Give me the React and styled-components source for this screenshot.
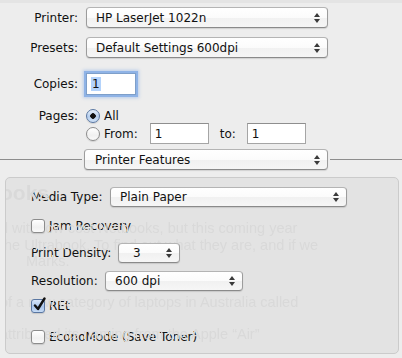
import React from 'react'
import styled, { createGlobalStyle } from 'styled-components'

const Global = createGlobalStyle`
  html, body { margin: 0; padding: 0; }
  body {
    background: linear-gradient(#e4e4e4 0 3px, #ededed 3px);
    font-family: "DejaVu Sans", "Liberation Sans", sans-serif;
    font-size: 12px;
    color: #111;
    width: 402px;
    height: 358px;
    overflow: hidden;
  }
`

const Sheet = styled.div`
  display: flex;
  flex-direction: column;
  padding-top: 7px;
`

const Row = styled.div`
  display: flex;
  align-items: center;
  gap: ${p => p.$gap || 8}px;
  height: ${p => p.$h || 21}px;
  margin-top: ${p => p.$mt || 0}px;
`

const Label = styled.span`
  width: ${p => p.$w || 78}px;
  text-align: ${p => p.$align || 'right'};
  white-space: nowrap;
  flex-shrink: 0;
`

const Popup = styled.div`
  position: relative;
  box-sizing: border-box;
  width: ${p => p.$w}px;
  height: ${p => p.$h || 21}px;
  padding-left: ${p => p.$pl || 9}px;
  display: flex;
  align-items: center;
  border: 1px solid #9c9c9c;
  border-top-color: #b4b4b4;
  border-bottom-color: #8a8a8a;
  border-radius: 4px;
  background: linear-gradient(#ffffff, #fbfbfb 50%, #f1f1f1 51%, #f6f6f6);
  box-shadow: 0 1px 1px rgba(0, 0, 0, 0.12);
  white-space: nowrap;
  flex-shrink: 0;
`

const Arrows = styled.span`
  position: absolute;
  right: 7px;
  top: 50%;
  transform: translateY(-50%);
  display: flex;
  flex-direction: column;
  gap: 2px;
  &::before, &::after {
    content: '';
    width: 0;
    height: 0;
    border-left: 3px solid transparent;
    border-right: 3px solid transparent;
  }
  &::before { border-bottom: 4px solid #3a3a3a; }
  &::after { border-top: 4px solid #3a3a3a; }
`

const TextField = styled.div`
  box-sizing: border-box;
  width: ${p => p.$w}px;
  height: ${p => p.$h || 21}px;
  display: flex;
  align-items: center;
  padding-left: 4px;
  margin-left: ${p => p.$ml || 0}px;
  background: #fff;
  border: 1px solid #a5a5a5;
  border-top-color: #8e8e8e;
  flex-shrink: 0;
  ${p => p.$focus && `
    border-color: #7e9fc9;
    box-shadow: 0 0 0 2px #8fb3e6, 0 0 3px 3px rgba(120, 165, 230, 0.45);
  `}
`

const Selected = styled.span`
  background: #b4d3fb;
  padding: 0 1px;
`

const Radio = styled.span`
  box-sizing: border-box;
  width: 14px;
  height: 14px;
  border-radius: 50%;
  border: 1px solid ${p => (p.$on ? '#5a77a2' : '#8c8c8c')};
  background: ${p =>
    p.$on
      ? 'radial-gradient(circle at 50% 50%, #111 0 2.5px, transparent 3px), linear-gradient(#e6f0fb, #b7cfee 55%, #cfe1f6)'
      : 'linear-gradient(#ffffff, #f0f0f0 60%, #fafafa)'};
  box-shadow: 0 1px 1px rgba(0, 0, 0, 0.12);
  flex-shrink: 0;
`

const Check = styled.span`
  box-sizing: border-box;
  position: relative;
  width: 14px;
  height: 14px;
  border-radius: 3px;
  border: 1px solid ${p => (p.$on ? '#5a77a2' : '#8c8c8c')};
  background: ${p =>
    p.$on
      ? 'linear-gradient(#d8e6f8, #a9c5eb 55%, #c6dbf5)'
      : 'linear-gradient(#ffffff, #f1f1f1 60%, #fafafa)'};
  box-shadow: 0 1px 1px rgba(0, 0, 0, 0.12);
  flex-shrink: 0;
  svg { position: absolute; left: 1px; top: -3px; }
`

const Choice = styled.div`
  display: flex;
  align-items: center;
  gap: ${p => p.$gap || 4}px;
  height: 14px;
  margin-top: ${p => p.$mt || 0}px;
`

const Divider = styled.div`
  display: flex;
  align-items: center;
  gap: 2px;
  height: 21px;
  margin-top: 5px;
  &::before, &::after {
    content: '';
    height: 1px;
    background: #8d8d8d;
  }
  &::before { width: 82px; }
  &::after { flex: 1; }
`

const Panel = styled.div`
  margin: 7px 3px 0 5px;
  height: 177px;
  box-sizing: border-box;
  border: 1px solid #cbcbcb;
  border-radius: 5px;
  background: #e3e3e3;
  display: grid;
  overflow: hidden;
`

const Ghost = styled.div`
  grid-area: 1 / 1;
  font-family: "Liberation Sans", Arial, sans-serif;
  font-size: 14.5px;
  line-height: 16.5px;
  color: #d9d9d9;
  filter: blur(0.5px);
  margin-left: -6px;
  white-space: nowrap;
  pointer-events: none;
`

const GhostHead = styled.div`
  font-size: 21px;
  font-weight: bold;
  margin: 4px 0 0 0;
  line-height: 22px;
`

const GhostLine = styled.div`
  margin-top: ${p => p.$mt || 0}px;
  padding-left: ${p => p.$pl || 0}px;
`

const Features = styled.div`
  grid-area: 1 / 1;
  display: flex;
  flex-direction: column;
  padding: 9px 0 0 25px;
`

const Tick = () => (
  <svg width="13" height="14" viewBox="0 0 13 14">
    <path d="M2 8.5 L5 12 L11.5 1.5" fill="none" stroke="#111" strokeWidth="2.4" strokeLinecap="round" strokeLinejoin="round" />
  </svg>
)

export default function App() {
  return (
    <>
      <Global />
      <Sheet>
        <Row>
          <Label>Printer:</Label>
          <Popup $w={242}>HP LaserJet 1022n<Arrows /></Popup>
        </Row>
        <Row $mt={9}>
          <Label>Presets:</Label>
          <Popup $w={242}>Default Settings 600dpi<Arrows /></Popup>
        </Row>
        <Row $mt={15} $h={22}>
          <Label>Copies:</Label>
          <TextField $w={50} $h={22} $focus><Selected>1</Selected></TextField>
        </Row>
        <Row $mt={14} $h={14}>
          <Label>Pages:</Label>
          <Choice><Radio $on />All</Choice>
        </Row>
        <Row $h={21}>
          <Label />
          <Choice><Radio />From:</Choice>
          <TextField $w={59} $ml={4}>1</TextField>
          <Label $w={22} $align="center">to:</Label>
          <TextField $w={59}>1</TextField>
        </Row>
        <Divider>
          <Popup $w={244} $pl={10}>Printer Features<Arrows /></Popup>
        </Divider>
        <Panel>
          <Ghost>
            <GhostHead>ooks</GhostHead>
            <GhostLine $mt={16}>d with low cost Netbooks, but this coming year</GhostLine>
            <GhostLine>the Ultrabook. To find out what they are, and if we</GhostLine>
            <GhostLine $pl={26}>Marks.</GhostLine>
            <GhostLine $mt={24}>of a new category of laptops in Australia called</GhostLine>
            <GhostLine $mt={16}>attributed its naming from the Apple “Air”</GhostLine>
          </Ghost>
          <Features>
            <Row $h={20} $gap={9}>
              <Label $w={70}>Media Type:</Label>
              <Popup $w={237} $h={20}>Plain Paper<Arrows /></Popup>
            </Row>
            <Choice $mt={12}><Check />Jam Recovery</Choice>
            <Row $h={20} $mt={10} $gap={8}>
              <Label $w={79}>Print Density:</Label>
              <Popup $w={62} $h={20} $pl={14}>3<Arrows /></Popup>
            </Row>
            <Row $h={20} $mt={8} $gap={9}>
              <Label $w={65}>Resolution:</Label>
              <Popup $w={138} $h={20}>600 dpi<Arrows /></Popup>
            </Row>
            <Choice $mt={8}><Check $on><Tick /></Check>REt</Choice>
            <Choice $mt={17}><Check />EconoMode (Save Toner)</Choice>
          </Features>
        </Panel>
      </Sheet>
    </>
  )
}
